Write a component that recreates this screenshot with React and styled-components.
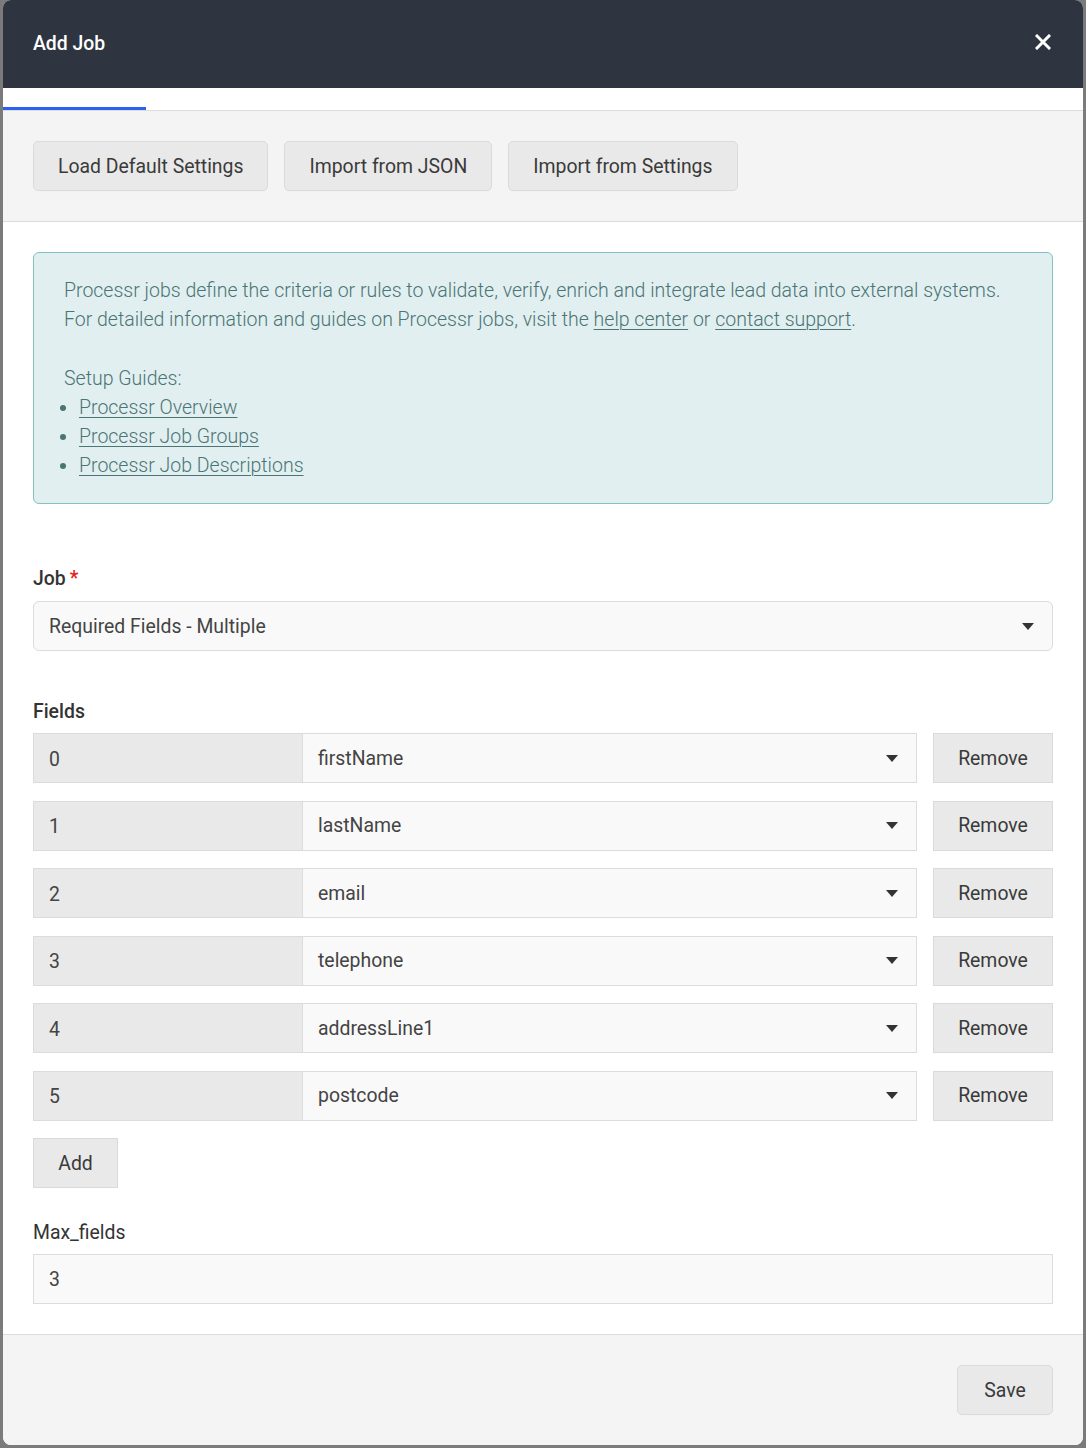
import React from "react";
import styled, { createGlobalStyle } from "styled-components";

const Global = createGlobalStyle`
  html, body { margin: 0; padding: 0; background: #7b7b7b; }
  body { font-family: Roboto, "Noto Sans", "Liberation Sans", sans-serif; }
  * { box-sizing: border-box; }
`;

const Backdrop = styled.div`
  min-height: 1448px;
  padding: 0 3px 3px;
  background: #7b7b7b;
`;

const Modal = styled.div`
  width: 1080px;
  background: #fff;
  border-radius: 8px;
  overflow: hidden;
`;

const Header = styled.div`
  height: 88px;
  background: #2e3440;
  display: flex;
  align-items: center;
  justify-content: space-between;
  padding: 0 32px 0 30px;
`;

const Title = styled.h1`
  margin: 0;
  font-size: 19.4px;
  font-weight: 500;
  color: #fff;
  line-height: 1;
`;

const CloseBtn = styled.button`
  border: 0;
  background: none;
  padding: 0;
  width: 16px;
  height: 16px;
  display: flex;
  cursor: pointer;
  margin-top: -4px;
`;

const TabBar = styled.div`
  height: 23px;
  background: #fff;
  border-bottom: 1px solid #dcdcdc;
  display: flex;
`;

const Tab = styled.div`
  width: 143px;
  height: 22px;
  border-bottom: 3px solid ${(p) => (p.$active ? "#2a62ee" : "transparent")};
`;

const Toolbar = styled.div`
  background: #f4f4f4;
  padding: 30px;
  border-bottom: 1px solid #dcdcdc;
  display: flex;
  gap: 16px;
`;

const Button = styled.button`
  height: 50px;
  padding: 0 ${(p) => (p.$pad ?? 24)}px;
  background: #e9e9e9;
  border: 1px solid #dadada;
  border-radius: ${(p) => (p.$square ? "0" : "5px")};
  font-family: Roboto, "Liberation Sans", sans-serif;
  font-size: 19.4px;
  color: #3a3a3a;
  cursor: pointer;
  width: ${(p) => (p.$w ? `${p.$w}px` : "auto")};
  flex-shrink: 0;
`;

const Body = styled.div`
  padding: 30px 30px 30px;
`;

const InfoBox = styled.div`
  background: #e1eff0;
  border: 1px solid #82c2c2;
  border-radius: 6px;
  padding: 23px 30px 23px;
  color: #4b7474;
  font-size: 19.5px;
  font-weight: 300;
  line-height: 29px;
  margin-bottom: 63px;
`;

const InfoP = styled.p`
  margin: 0 0 ${(p) => (p.$gap ? 30 : 0)}px;
`;

const InfoLink = styled.a`
  color: #4b7474;
  text-decoration: underline;
  text-underline-offset: 3px;
  text-decoration-thickness: 1px;
`;

const GuideList = styled.ul`
  margin: 0;
  padding-left: 15px;
`;

const Group = styled.div`
  margin-top: ${(p) => p.$mt || 0}px;
`;

const Label = styled.div`
  font-size: 19.4px;
  font-weight: ${(p) => p.$weight || 500};
  color: #333;
  line-height: 24px;
  margin-bottom: ${(p) => p.$mb ?? 10}px;
`;

const Req = styled.span`
  color: #e02020;
  margin-left: 4px;
`;

const SelectBox = styled.div`
  height: 50px;
  background: #f9f9f9;
  border: 1px solid #dcdcdc;
  border-left: ${(p) => (p.$joined ? "0" : "1px solid #dcdcdc")};
  border-radius: ${(p) => (p.$round ? "6px" : "0")};
  display: flex;
  align-items: center;
  justify-content: space-between;
  padding: 0 18px 0 15px;
  font-size: 19.4px;
  color: #444;
  min-width: 0;
`;

const Caret = () => (
  <svg width="12" height="7" viewBox="0 0 12 7">
    <path d="M0 0 L12 0 L6 7 Z" fill="#333" />
  </svg>
);

const Row = styled.div`
  display: grid;
  grid-template-columns: 270px minmax(0, 1fr) 136px;
  height: 50px;
  margin-bottom: 17.5px;
`;

const IndexBox = styled.div`
  background: #e9e9e9;
  border: 1px solid #dcdcdc;
  display: flex;
  align-items: center;
  padding: 2px 15px 0;
  font-size: 19.4px;
  color: #444;
`;

const RemoveBtn = styled(Button)`
  margin-left: 16px;
  width: 120px;
  padding: 0;
  border-radius: 0;
`;

const TextInput = styled.div`
  height: 50px;
  background: #f9f9f9;
  border: 1px solid #dcdcdc;
  display: flex;
  align-items: center;
  padding: 0 15px;
  font-size: 19.4px;
  color: #444;
`;

const Footer = styled.div`
  background: #f4f4f4;
  border-top: 1px solid #dcdcdc;
  padding: 30px 30px 30px;
  display: flex;
  justify-content: flex-end;
`;

const fields = ["firstName", "lastName", "email", "telephone", "addressLine1", "postcode"];

export default function App() {
  return (
    <>
      <Global />
      <Backdrop>
        <Modal>
          <Header>
            <Title>Add Job</Title>
            <CloseBtn aria-label="Close">
              <svg width="16" height="16" viewBox="0 0 16 16">
                <path d="M2 2 L14 14 M14 2 L2 14" stroke="#fff" strokeWidth="3" strokeLinecap="square" />
              </svg>
            </CloseBtn>
          </Header>
          <TabBar>
            <Tab $active />
          </TabBar>
          <Toolbar>
            <Button>Load Default Settings</Button>
            <Button>Import from JSON</Button>
            <Button>Import from Settings</Button>
          </Toolbar>
          <Body>
            <InfoBox>
              <InfoP>
                Processr jobs define the criteria or rules to validate, verify, enrich and integrate lead data into external systems.
              </InfoP>
              <InfoP $gap>
                For detailed information and guides on Processr jobs, visit the <InfoLink href="#">help center</InfoLink> or{" "}
                <InfoLink href="#">contact support</InfoLink>.
              </InfoP>
              <InfoP>Setup Guides:</InfoP>
              <GuideList>
                <li><InfoLink href="#">Processr Overview</InfoLink></li>
                <li><InfoLink href="#">Processr Job Groups</InfoLink></li>
                <li><InfoLink href="#">Processr Job Descriptions</InfoLink></li>
              </GuideList>
            </InfoBox>

            <Group>
              <Label>
                Job<Req>*</Req>
              </Label>
              <SelectBox $round>
                <span>Required Fields - Multiple</span>
                <Caret />
              </SelectBox>
            </Group>

            <Group $mt={49}>
              <Label $mb={9}>Fields</Label>
              {fields.map((f, i) => (
                <Row key={f}>
                  <IndexBox>{i}</IndexBox>
                  <SelectBox $joined>
                    <span>{f}</span>
                    <Caret />
                  </SelectBox>
                  <RemoveBtn>Remove</RemoveBtn>
                </Row>
              ))}
              <Button $square $w={85} $pad={0}>Add</Button>
            </Group>

            <Group $mt={33}>
              <Label $weight={400} $mb={9}>Max_fields</Label>
              <TextInput>3</TextInput>
            </Group>
          </Body>
          <Footer>
            <Button $w={96} $pad={0}>Save</Button>
          </Footer>
        </Modal>
      </Backdrop>
    </>
  );
}
